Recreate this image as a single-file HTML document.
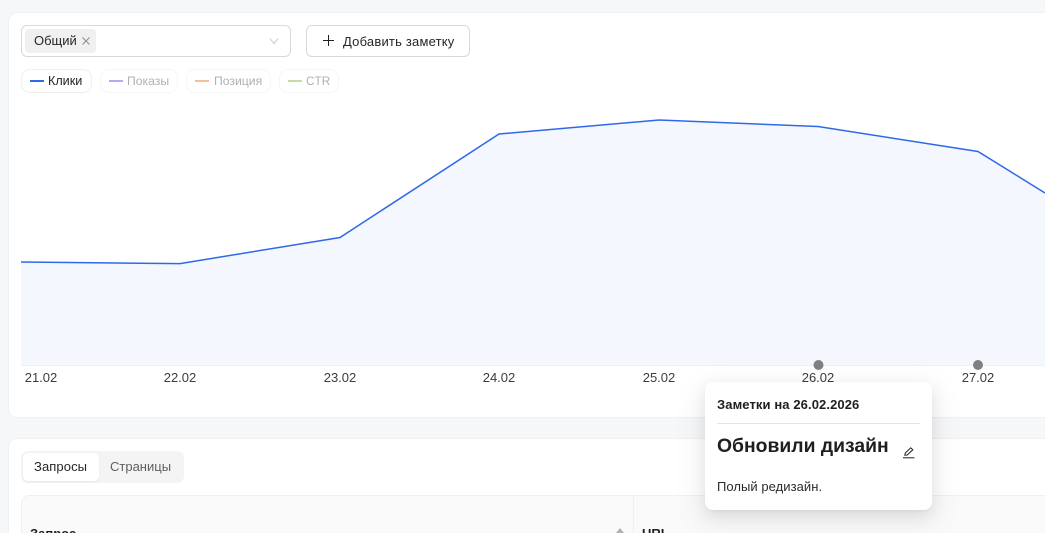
<!DOCTYPE html>
<html><head><meta charset="utf-8">
<style>
html,body{margin:0;padding:0;width:1045px;height:533px;overflow:hidden}
body{background:#f6f7f9;font-family:"Liberation Sans",sans-serif;color:#1f1f1f}
#w{position:relative;width:1045px;height:533px;overflow:hidden}
.a{position:absolute;white-space:nowrap}
.card{position:absolute;left:8px;width:1100px;background:#fff;border:1px solid #eef0f2;border-radius:9px;box-sizing:border-box}
.leg{position:absolute;top:69px;height:24px;box-sizing:border-box;border:1px solid #f6f6f6;border-radius:9px;font-size:12.2px;line-height:22px;color:#b0b0b0;background:#fff}
.leg i{position:absolute;left:8px;top:10px;width:14px;height:2px;display:block}
.leg span{position:absolute;left:26px;top:0}
.x{position:absolute;top:371px;font-size:13px;line-height:14px;color:#3c3c3c;width:50px;text-align:center;margin-left:-25px}
</style></head><body><div id="w">
<div class="card" style="top:12px;height:406px"></div>
<div class="card" style="top:438px;height:120px"></div>

<div class="a" style="left:21px;top:25px;width:270px;height:32px;box-sizing:border-box;border:1px solid #d9d9d9;border-radius:6px;background:#fff"></div>
<div class="a" style="left:25px;top:29px;width:71px;height:24px;background:#f0f0f0;border-radius:4px"></div>
<div class="a" style="left:34px;top:33px;font-size:13px;line-height:16px;color:#262626">Общий</div>
<svg class="a" style="left:81px;top:36px" width="10" height="10" viewBox="0 0 10 10"><path d="M1.500 1.500L8.500 8.500M8.500 1.500L1.500 8.500" stroke="#8c8c8c" stroke-width="1" fill="none"/></svg>
<svg class="a" style="left:268px;top:36px" width="12" height="10" viewBox="0 0 12 10"><path d="M2 2.500L6 7.500L10 2.500" stroke="#c8c8c8" stroke-width="1" fill="none"/></svg>

<div class="a" style="left:306px;top:25px;width:164px;height:32px;box-sizing:border-box;border:1px solid #d9d9d9;border-radius:6px;background:#fff"></div>
<svg class="a" style="left:323px;top:35px" width="11" height="11" viewBox="0 0 11 11"><path d="M5.500 0V11M0 5.500H11" stroke="#1f1f1f" stroke-width="1" fill="none"/></svg>
<div class="a" style="left:343px;top:34px;font-size:13px;line-height:16px;color:#262626;letter-spacing:.2px">Добавить заметку</div>

<div class="leg" style="left:21px;width:71px;border-color:#efefef;color:#262626;font-size:12.6px"><i style="background:#2f6be8"></i><span>Клики</span></div>
<div class="leg" style="left:100px;width:78px"><i style="background:#b9a5f0"></i><span>Показы</span></div>
<div class="leg" style="left:186px;width:85px"><i style="background:#f8bd98"></i><span style="left:27px">Позиция</span></div>
<div class="leg" style="left:279px;width:60px"><i style="background:#c5dba0"></i><span style="font-size:11.800px">CTR</span></div>

<svg class="a" style="left:0;top:0" width="1045" height="533" viewBox="0 0 1045 533">
<path d="M21 262L180 263.6L340 237.5L499 134L659 120L818 126.5L978 151.5L1045 193V365H21Z" fill="#f4f7fe"/>
<path d="M21 365.500H1045" stroke="#eef0f3" stroke-width="1"/>
<path d="M21 262L180 263.6L340 237.5L499 134L659 120L818 126.5L978 151.5L1045 193" fill="none" stroke="#2f69e8" stroke-width="1.500"/>
<circle cx="818.500" cy="365" r="5" fill="#808080"/>
<circle cx="978" cy="365" r="5" fill="#808080"/>
</svg>

<div class="x" style="left:41px">21.02</div>
<div class="x" style="left:180px">22.02</div>
<div class="x" style="left:340px">23.02</div>
<div class="x" style="left:499px">24.02</div>
<div class="x" style="left:659px">25.02</div>
<div class="x" style="left:818px">26.02</div>
<div class="x" style="left:978px">27.02</div>

<div class="a" style="left:21px;top:451px;width:163px;height:32px;background:#f4f4f4;border-radius:7px"></div>
<div class="a" style="left:23px;top:453px;width:76px;height:28px;background:#fff;border-radius:5px;box-shadow:0 1px 2px rgba(0,0,0,.06)"></div>
<div class="a" style="left:34px;top:459px;font-size:13px;line-height:16px;color:#262626;letter-spacing:.1px">Запросы</div>
<div class="a" style="left:110px;top:459px;font-size:13px;line-height:16px;color:#5f5f5f">Страницы</div>

<div class="a" style="left:21px;top:495px;width:1030px;height:50px;box-sizing:border-box;background:#fafafa;border:1px solid #f0f0f0;border-radius:8px 0 0 0"></div>
<div class="a" style="left:633px;top:496px;width:1px;height:40px;background:#f0f0f0"></div>
<div class="a" style="left:30px;top:526px;font-size:13px;line-height:16px;font-weight:700;color:#1f1f1f">Запрос</div>
<div class="a" style="left:642px;top:526px;font-size:13px;line-height:16px;font-weight:700;color:#1f1f1f">URL</div>
<svg class="a" style="left:615px;top:528px" width="10" height="6" viewBox="0 0 10 6"><path d="M5 0L9 5H1Z" fill="#b0b0b0"/></svg>

<div class="a" style="left:705px;top:382px;width:227px;height:128px;background:#fff;border-radius:8px;box-shadow:0 6px 16px rgba(0,0,0,.08),0 3px 6px -4px rgba(0,0,0,.12),0 9px 28px 8px rgba(0,0,0,.05)"></div>
<div class="a" style="left:717px;top:397px;font-size:13px;line-height:15px;font-weight:700;color:#1f1f1f;letter-spacing:.1px">Заметки на 26.02.2026</div>
<div class="a" style="left:717px;top:423px;width:203px;height:1px;background:#e4e4e4"></div>
<div class="a" style="left:717px;top:435px;font-size:19.350px;line-height:22px;font-weight:700;color:#1f1f1f">Обновили дизайн</div>
<svg class="a" style="left:902px;top:446px" width="14" height="14" viewBox="0 0 14 14"><path d="M2.800 9.200L3.300 7L8.800 1.800L10.800 3.800L5.200 9L2.800 9.200Z" fill="none" stroke="#222" stroke-width="1"/><path d="M1 11.800H12.500" stroke="#222" stroke-width="1"/></svg>
<div class="a" style="left:717px;top:479px;font-size:13px;line-height:16px;color:#2b2b2b;letter-spacing:.05px">Полый редизайн.</div>
</div></body></html>
